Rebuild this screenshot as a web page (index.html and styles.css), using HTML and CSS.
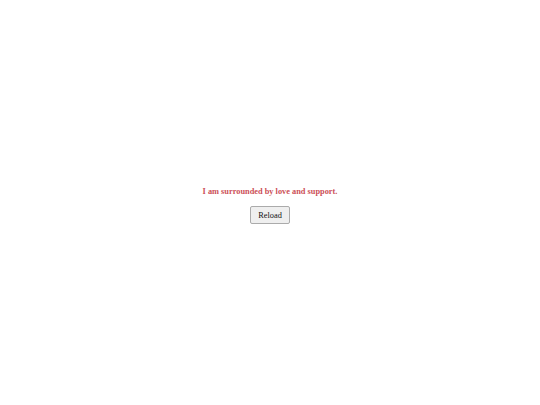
FILE: index.html
```html
<!DOCTYPE html>
<html>
<head>
<meta charset="utf-8">
<link rel="stylesheet" href="styles.css">
</head>
<body>
<main class="page">
  <p class="message">I am surrounded by love and support.</p>
  <button class="reload">Reload</button>
</main>
</body>
</html>
```

FILE: styles.css
```css
html, body {
  margin: 0;
  padding: 0;
  background: #ffffff;
}
.page {
  box-sizing: border-box;
  width: 540px;
  height: 405px;
  padding-top: 6px;
  display: flex;
  flex-direction: column;
  align-items: center;
  justify-content: center;
  gap: 9px;
  font-family: "Liberation Serif", "Times New Roman", serif;
}
.message {
  margin: 0;
  font-size: 8.33px;
  font-weight: bold;
  color: #cc4f57;
  line-height: 10px;
}
.reload {
  font-family: "Liberation Serif", "Times New Roman", serif;
  font-size: 8.33px;
  width: 40px;
  height: 18px;
  padding: 0;
  color: #111;
  background: #efefef;
  border: 1px solid #ababab;
  border-radius: 2px;
}
```
